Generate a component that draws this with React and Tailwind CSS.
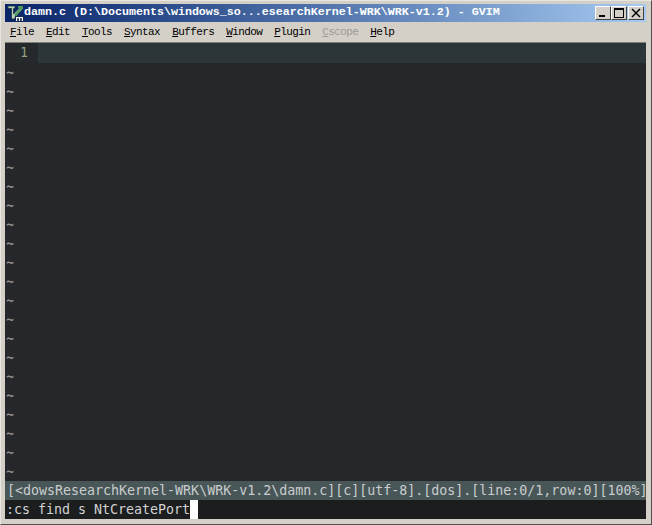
const MENU = ['File', 'Edit', 'Tools', 'Syntax', 'Buffers', 'Window', 'Plugin', 'Cscope', 'Help']
const STATUS = '[<dowsResearchKernel-WRK\\WRK-v1.2\\damn.c][c][utf-8].[dos].[line:0/1,row:0][100%]'
const TITLE = 'damn.c (D:\\Documents\\windows_so...esearchKernel-WRK\\WRK-v1.2) - GVIM'

function VimIcon() {
  return (
    <svg width="17" height="17" viewBox="0 0 17 17" className="shrink-0">
      <path d="M1 1h7v2.5H6.5V9L12 3.5h-1V1h5v2.5L7 14H4.5V3.5H1z" fill="#b9cdb9" stroke="#10302a" strokeWidth="0.7" />
      <path d="M7.5 9.5L13 3.5h-1.5V1.5H15.5V3L8 12z" fill="#3f9a55" />
      <path d="M8 11h9v6H8z" fill="#142850" />
      <path d="M9 16v-4h1.2v4M11.9 16v-4h1.2v4M14.8 16v-4H16v4M9 12h7v1.2H9z" fill="#f2f2f2" />
    </svg>
  )
}

function WinButton({ children, className }) {
  return (
    <button
      className={`flex h-[14px] w-[16px] items-center justify-center border border-t-white border-l-white border-r-[#404040] border-b-[#404040] bg-[#d4d0c8] ${className || ''}`}
    >
      <svg width="10" height="10" viewBox="0 0 10 10" shapeRendering="crispEdges">
        {children}
      </svg>
    </button>
  )
}

function TitleBar() {
  return (
    <div className="flex h-[18px] items-center bg-gradient-to-r from-[#0a246a] to-[#a6caf0] pl-[2px] pr-[2px]">
      <VimIcon />
      <span className="whitespace-pre font-['Liberation_Mono',monospace] text-[11.67px] font-bold text-white">
        {TITLE}
      </span>
      <div className="ml-auto flex">
        <WinButton>
          <path d="M1 7h6v2H1z" fill="#000" />
        </WinButton>
        <WinButton>
          <path d="M0 0h10v2H0zM0 2h1v7H0zM9 2h1v7H9zM0 9h10v1H0z" fill="#000" />
        </WinButton>
        <WinButton className="ml-[1px]">
          <path d="M1 1l8 8M9 1l-8 8" stroke="#000" strokeWidth="1.5" shapeRendering="auto" />
        </WinButton>
      </div>
    </div>
  )
}

function MenuBar() {
  return (
    <div className="flex h-[20px] items-center pl-[5px] font-['Liberation_Mono',monospace] text-[11px] tracking-[-0.6px] text-black">
      {MENU.map((item) => (
        <span key={item} className={`mr-[12px] w-fit ${item === 'Cscope' ? 'text-[#9a9a96]' : ''}`}>
          <span className="underline">{item[0]}</span>
          {item.slice(1)}
        </span>
      ))}
    </div>
  )
}

function Editor() {
  return (
    <div className="flex-1 bg-[#25272a] font-['DejaVu_Sans_Mono',monospace] text-[13.3px] leading-[19px]">
      <div className="flex h-[20px] bg-[#25292b]">
        <span className="w-[33px] pr-[10px] text-right text-[#8f9f80]">1</span>
        <div className="flex-1 bg-[#2c3638]" />
      </div>
      {Array.from({ length: 22 }, (_, i) => (
        <div key={i} className="h-[19px] pl-[1px] font-bold text-[#8f8f8f]">
          ~
        </div>
      ))}
    </div>
  )
}

export default function App() {
  return (
    <div className="flex h-[525px] w-[652px] flex-col overflow-hidden border border-t-[#e8e6e0] border-l-[#e8e6e0] border-r-[#505050] border-b-[#505050] bg-[#d4d0c8] pt-[3px] pr-[5px] pb-[5px] pl-[4px]">
      <TitleBar />
      <MenuBar />
      <div className="flex flex-1 flex-col border-t border-[#808078] bg-[#1b1d1e]">
        <Editor />
        <div className="h-[19px] whitespace-pre bg-[#485658] pl-[2px] font-['DejaVu_Sans_Mono',monospace] text-[13.3px] leading-[19px] text-[#c9cdcd]">
          {STATUS}
        </div>
        <div className="flex h-[19px] bg-[#1b1d1e] pl-[1px] font-['DejaVu_Sans_Mono',monospace] text-[13.3px] leading-[19px] text-[#d2d2d2]">
          <span className="whitespace-pre">:cs find s NtCreatePort</span>
          <span className="h-[19px] w-[8px] bg-white" />
        </div>
      </div>
    </div>
  )
}
